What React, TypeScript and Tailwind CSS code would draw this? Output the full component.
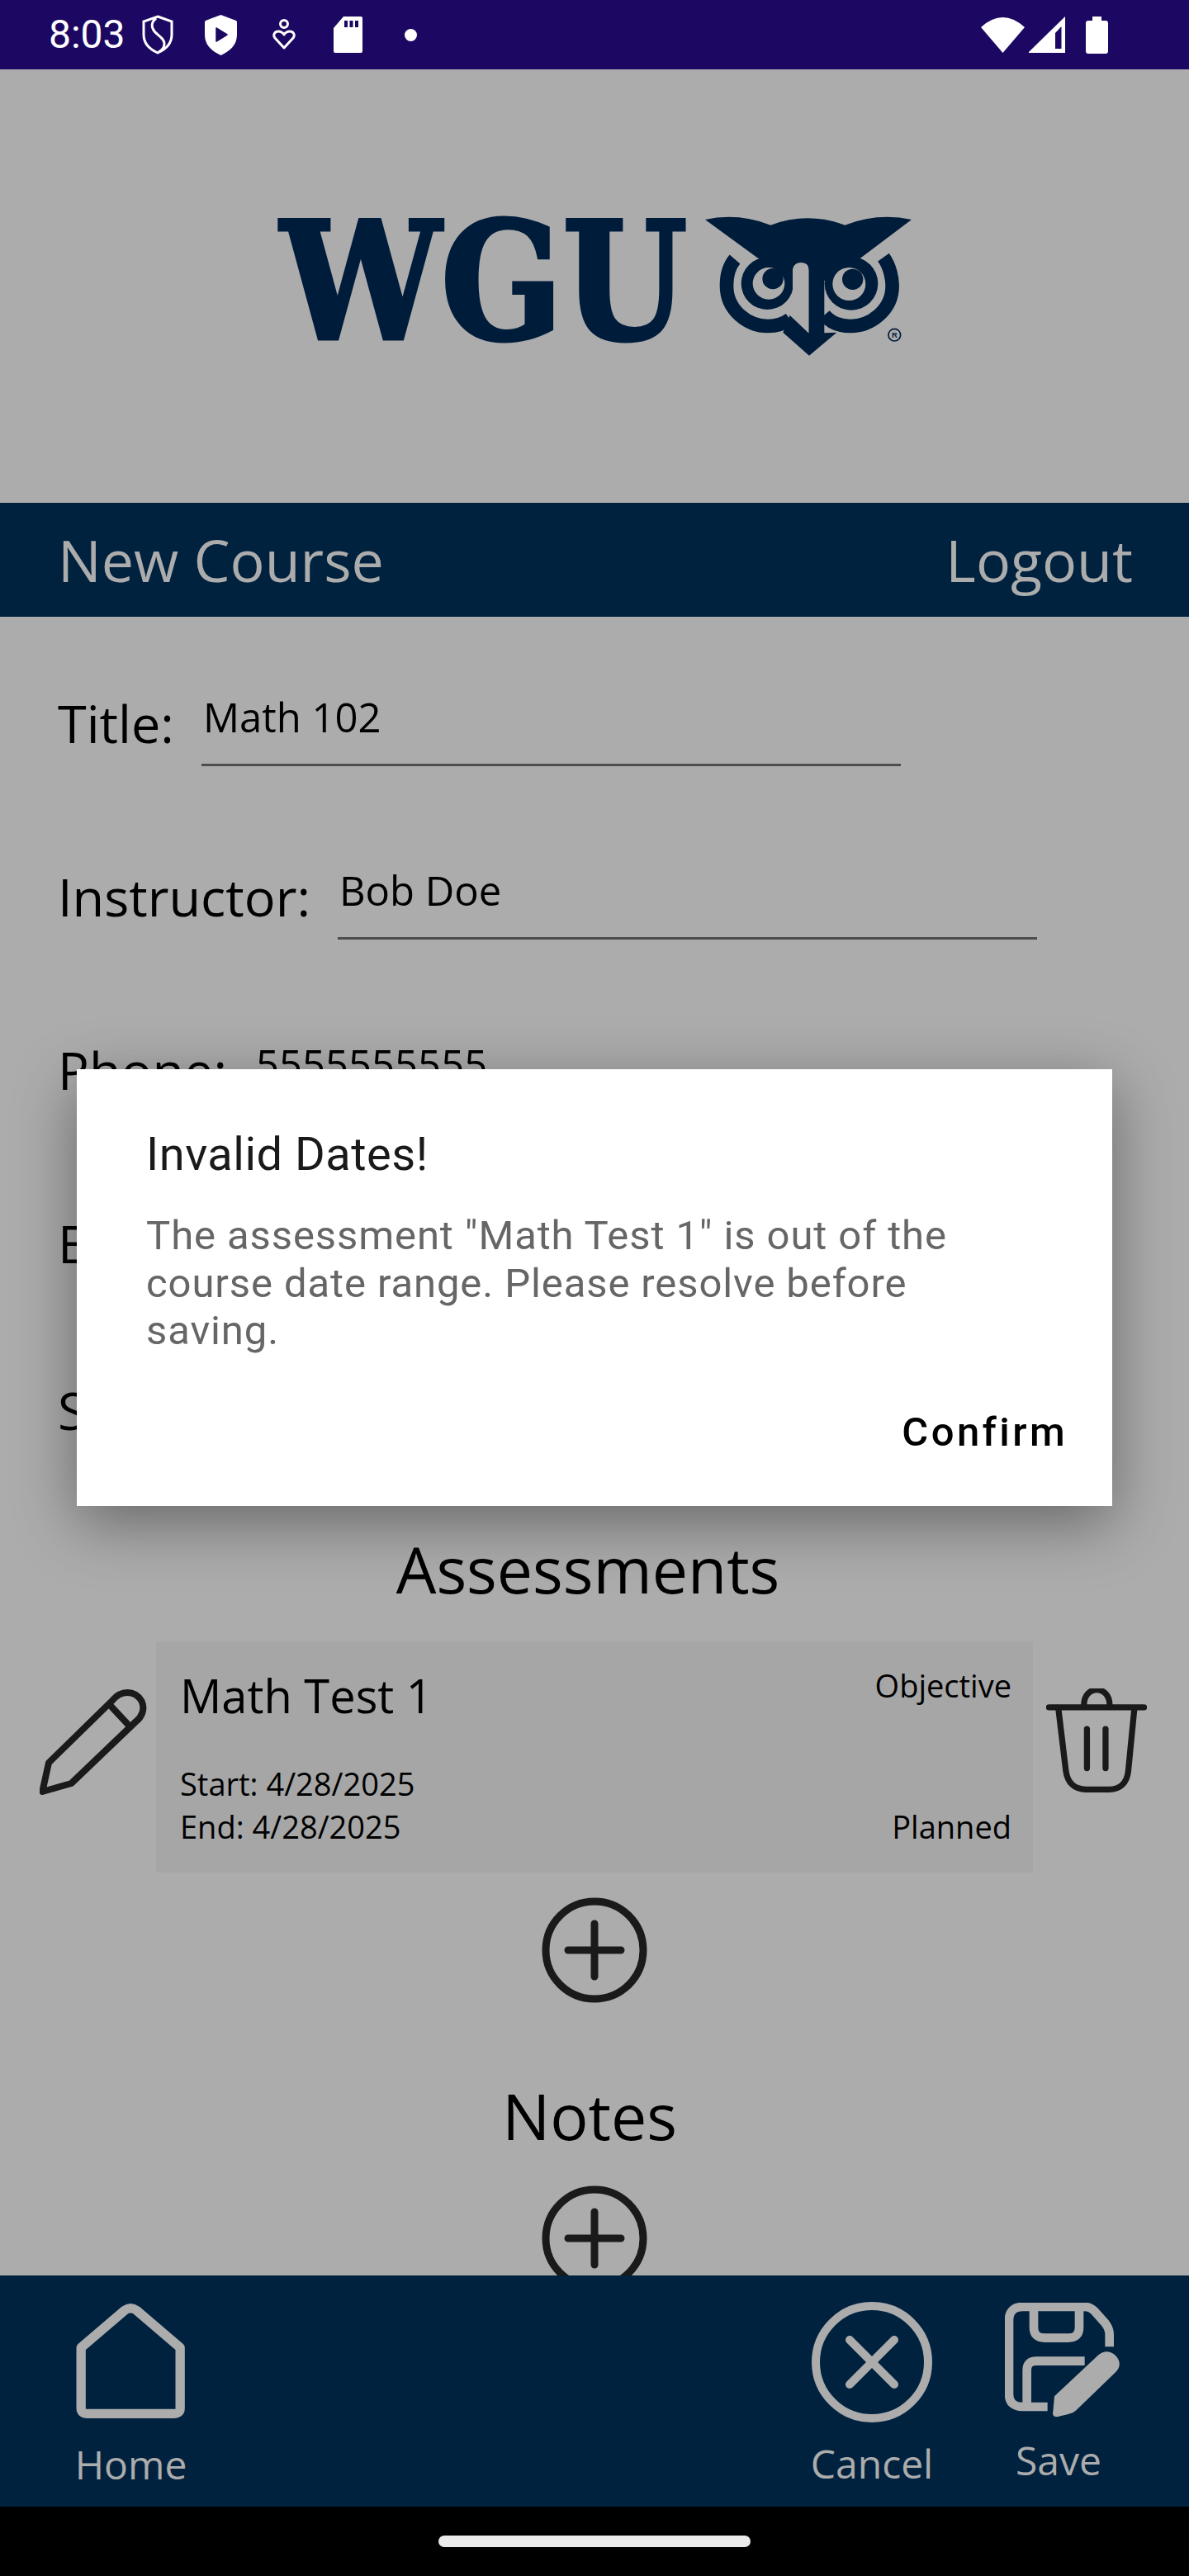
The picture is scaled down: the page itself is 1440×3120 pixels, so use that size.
import React from "react";

const openSans = "font-['Open_Sans',sans-serif]";
const roboto = "font-['Roboto',sans-serif]";

const statusBg = "#1c0862";

function StatusBar() {
  return (
    <div className="h-[84px] shrink-0 bg-[#1c0862] flex items-center pl-[59px] pr-[98px] text-white">
      <span className={`${roboto} text-[48px] leading-none w-[90px]`}>8:03</span>
      <svg className="ml-[23px]" width="38" height="48" viewBox="0 0 38 48" fill="none" stroke="white" strokeWidth="3">
        <path d="M19 2 L36 8 V24 C36 36 28 42 19 46 C10 42 2 36 2 24 V8 Z" />
        <path d="M17 4 C11 9 11 15 15 20 C19 25 27 28 27 35 C27 39 24 43 20 45" />
      </svg>
      <svg className="ml-[38px]" width="39" height="49" viewBox="0 0 39 49">
        <path d="M19.5 0 L38 7 Q39 7.500 39 9 V24 C39 37 30 44 19.500 49 C9 44 0 37 0 24 V9 Q0 7.500 1 7 Z" fill="white" />
        <path d="M14 16 L27 24 L14 32 Z" fill={statusBg} stroke={statusBg} strokeWidth="1.500" strokeLinejoin="round" />
      </svg>
      <svg className="ml-[43px]" width="28" height="38" viewBox="0 0 28 38" fill="none" stroke="white" strokeWidth="3">
        <circle cx="14" cy="6" r="4.500" />
        <path d="M14 35 L3 23 C0 19 3 15 7 15 C10 15 12 16 14 19 C16 16 18 15 21 15 C25 15 28 19 25 23 Z" strokeLinejoin="round" />
      </svg>
      <svg className="ml-[46px]" width="35" height="44" viewBox="0 0 35 44">
        <path d="M12 0 H33 Q35 0 35 2 V42 Q35 44 33 44 H2 Q0 44 0 42 V14 Z" fill="white" />
        <path d="M13 5 H17 V13 H13 Z M19.500 5 H23.500 V13 H19.500 Z M26 5 H30 V13 H26 Z" fill={statusBg} />
      </svg>
      <div className="ml-[51px] w-[15px] h-[15px] rounded-full bg-white" />
      <svg className="ml-auto" width="53" height="44" viewBox="0 0 53 44">
        <path d="M0 13 Q26.500 -11 53 13 L26.500 44 Z" fill="white" />
      </svg>
      <svg className="ml-[5px]" width="44" height="44" viewBox="0 0 44 44">
        <path d="M0 43 L44 0 V44 H0 Z" fill="white" />
        <path d="M32 20 L39.500 12 V39 H32 Z" fill={statusBg} />
      </svg>
      <svg className="ml-[25px]" width="27" height="45" viewBox="0 0 27 45">
        <path d="M8 0 H19 V5 H24 Q27 5 27 8 V42 Q27 45 24 45 H3 Q0 45 0 42 V8 Q0 5 3 5 H8 Z" fill="white" />
      </svg>
    </div>
  );
}

// logo: wordmark stays real text, the owl is drawn on a 3x grid
function Logo() {
  const navy = "#001c3b";
  const bg = "#acacac";
  return (
    <svg width="790" height="270" viewBox="0 -40 790 270">
      <text
        x="10"
        y="170"
        textLength="492"
        lengthAdjust="spacingAndGlyphs"
        fontFamily="'DejaVu Serif', serif"
        fontWeight="700"
        fontSize="197"
        fill={navy}
        stroke={navy}
        strokeWidth="5"
      >
        WGU
      </text>
      <g transform="translate(520 0) scale(0.3333)">
        <path
          d="M12 78 Q130 52 250 98 Q385 48 520 98 Q640 52 762 78 L580 215 L445 300 V490 L490 488 L390 572 L295 488 L320 425 L388 490 V260 Q388 235 360 235 Q335 235 330 260 V300 L200 215 Z"
          fill={navy}
        />
        <path d="M120 222 C92 255 90 295 90 318 C90 410 170 465 240 465 C270 465 295 458 320 440" fill="none" stroke={navy} strokeWidth="50" />
        <path d="M660 215 C685 250 692 295 692 318 C692 410 610 465 540 465 C505 465 470 455 445 425" fill="none" stroke={navy} strokeWidth="50" />
        <circle cx="238" cy="310" r="95" fill={navy} />
        <circle cx="243" cy="310" r="58" fill={bg} />
        <circle cx="258" cy="293" r="38" fill={navy} />
        <circle cx="543" cy="310" r="97" fill={navy} />
        <circle cx="535" cy="312" r="60" fill={bg} />
        <circle cx="548" cy="295" r="38" fill={navy} />
        <path d="M388 260 Q388 235 360 235 Q335 235 330 260 V360 L320 425 L388 490 Z" fill={bg} />
        <circle cx="700" cy="497" r="22" fill="none" stroke={navy} strokeWidth="5" />
        <text x="700" y="507" textAnchor="middle" fontFamily="'Liberation Sans', sans-serif" fontWeight="700" fontSize="28" fill={navy}>
          R
        </text>
      </g>
    </svg>
  );
}

function FormRow({ label, value, className }: { label: string; value?: string; className: string }) {
  return (
    <div className={`flex h-[112px] ${className}`}>
      <div className={`${openSans} text-[63px] leading-[82px] font-medium text-black pt-[19px]`}>{label}</div>
      <div className={`${openSans} ml-[33px] w-[847px] h-[112px] border-b-[3px] border-[#4d4d4d] pt-[19px] pl-[2px] text-[49px] leading-[67px] text-black`}>
        {value}
      </div>
    </div>
  );
}

function PlusIcon({ className }: { className?: string }) {
  return (
    <svg className={className} width="128" height="130" viewBox="0 0 128 130" fill="none" stroke="#1a1a1a" strokeWidth="9" strokeLinecap="round">
      <circle cx="64" cy="65" r="59" />
      <path d="M64 33 V97 M32 65 H96" />
    </svg>
  );
}

function AssessmentRow() {
  return (
    <div className="flex h-[280px]">
      <svg className="ml-[48px] mt-[57px]" width="130" height="130" viewBox="55 75 390 390" fill="none" stroke="#1a1a1a" strokeWidth="24" strokeLinejoin="round" strokeLinecap="round">
        <path d="M65 450 L88 345 L318 120 C350 80 400 80 425 120 C440 150 425 180 405 195 L170 420 Z" />
        <path d="M310 135 L375 205" />
      </svg>
      <div className={`${openSans} ml-[11px] w-[1062px] h-[280px] bg-[#a6a6a6] pl-[29px] pr-[26px] pt-[27px] pb-[30px] flex justify-between text-black`}>
        <div className="flex flex-col justify-between">
          <div className="text-[56px] leading-[76px]">Math Test 1</div>
          <div className="text-[38px] leading-[52px]">
            <div>Start: 4/28/2025</div>
            <div>End: 4/28/2025</div>
          </div>
        </div>
        <div className="flex flex-col justify-between items-end text-[38px] leading-[52px]">
          <div>Objective</div>
          <div>Planned</div>
        </div>
      </div>
      <svg className="ml-[16px] mt-[57px]" width="122" height="127" viewBox="50 75 368 381" fill="none" stroke="#1a1a1a" strokeWidth="22" strokeLinecap="round">
        <path d="M60 143 H408" />
        <path d="M188 135 C188 60 282 60 282 135" />
        <path d="M95 150 L122 375 C128 420 155 443 195 443 H280 C320 443 345 420 350 375 L372 150" />
        <path d="M199 222 V365 M267 222 V365" />
      </svg>
    </div>
  );
}

function NavItem({ label, children, className, textClass }: { label: string; children: React.ReactNode; className: string; textClass: string }) {
  return (
    <div className={`flex flex-col items-center ${className}`}>
      {children}
      <span className={`${openSans} text-[48px] leading-[64px] text-[#acacac] ${textClass}`}>{label}</span>
    </div>
  );
}

function BottomNav() {
  return (
    <div className="h-[280px] shrink-0 bg-[#00223f] flex items-start">
      <NavItem label="Home" className="ml-[92px] w-[133px] pt-[34px]" textClass="mt-[23px]">
        <svg width="133" height="140" viewBox="185 90 396 420" fill="none" stroke="#acacac" strokeWidth="34" strokeLinejoin="round">
          <path d="M202 250 L360 115 Q382 100 404 115 L562 250 V470 Q562 490 540 490 H225 Q202 490 202 470 Z" />
        </svg>
      </NavItem>
      <NavItem label="Cancel" className="ml-[758px] w-[146px] pt-[32px]" textClass="mt-[18px]">
        <svg width="146" height="146" viewBox="0 0 146 146" fill="none" stroke="#acacac" strokeWidth="10" strokeLinecap="round">
          <circle cx="73" cy="73" r="68" />
          <path d="M46 46 L100 100 M100 46 L46 100" />
        </svg>
      </NavItem>
      <NavItem label="Save" className="ml-[88px] w-[140px] pt-[33px]" textClass="mt-[19px] -ml-[10px]">
        <svg width="140" height="140" viewBox="770 100 420 420" fill="none" stroke="#acacac" strokeWidth="32">
          <path d="M925 478 H835 Q785 478 785 430 V165 Q785 115 835 115 H1060 Q1080 115 1095 130 L1135 175 Q1150 195 1150 215 V260" />
          <path d="M875 115 V190 Q875 228 915 228 H1000 Q1040 228 1040 190 V115" />
          <path d="M850 478 V345 Q850 312 885 312 H1060" />
          <path d="M950 440 L1110 290 Q1140 265 1170 290 Q1200 320 1175 350 L1030 490 Q1020 500 1000 505 L960 515 Q940 515 945 495 Z" fill="#acacac" stroke="none" />
        </svg>
      </NavItem>
    </div>
  );
}

function Dialog() {
  return (
    <div className={`${roboto} absolute left-[93px] top-[1295px] w-[1254px] h-[529px] bg-white shadow-[0_20px_70px_rgba(0,0,0,0.4)] pl-[84px] pr-[54px] pt-[70px]`}>
      <div className="text-[56px] leading-[66px] tracking-[0.5px] text-[#1a1a1a]">Invalid Dates!</div>
      <div className="mt-[37px] w-[1030px] text-[49px] leading-[57.500px] tracking-[0.9px] text-[#666666]">
        The assessment "Math Test 1" is out of the course date range. Please resolve before saving.
      </div>
      <div className="mt-[65px] text-right text-[49px] leading-[57px] font-medium tracking-[3.400px] text-black">Confirm</div>
    </div>
  );
}

export default function App() {
  return (
    <div className="relative w-[1440px] h-[3120px] overflow-hidden flex flex-col bg-black">
      <StatusBar />
      <main className="flex-1 min-h-0 overflow-hidden bg-[#acacac]">
        <div className="h-[525px] pl-[330px] pt-[116px]">
          <Logo />
        </div>
        <div className={`${openSans} h-[138px] bg-[#00223f] flex items-center justify-between pl-[70px] pr-[68px] text-[70px] text-[#acacac]`}>
          <span>New Course</span>
          <span>Logout</span>
        </div>
        <div className="h-[1101px] pt-[69px] pl-[70px]">
          <FormRow label="Title:" value="Math 102" className="mb-[98px]" />
          <FormRow label="Instructor:" value="Bob Doe" className="mb-[98px]" />
          <FormRow label="Phone:" value="5555555555" className="mb-[98px]" />
          <FormRow label="Email:" className="mb-[90px]" />
          <FormRow label="Start:" className="" />
        </div>
        <div className={`${openSans} pr-[16px] text-center text-[77px] leading-[105px] text-black mb-[35px]`}>Assessments</div>
        <AssessmentRow />
        <PlusIcon className="mx-auto mt-[29px]" />
        <div className={`${openSans} pr-[12px] mt-[83px] text-center text-[77px] leading-[105px] text-black`}>Notes</div>
        <PlusIcon className="mx-auto mt-[31px]" />
      </main>
      <BottomNav />
      <div className="h-[84px] shrink-0 bg-black flex justify-center pt-[35px]">
        <div className="w-[378px] h-[14px] rounded-full bg-[#ebebeb]" />
      </div>
      <Dialog />
    </div>
  );
}
